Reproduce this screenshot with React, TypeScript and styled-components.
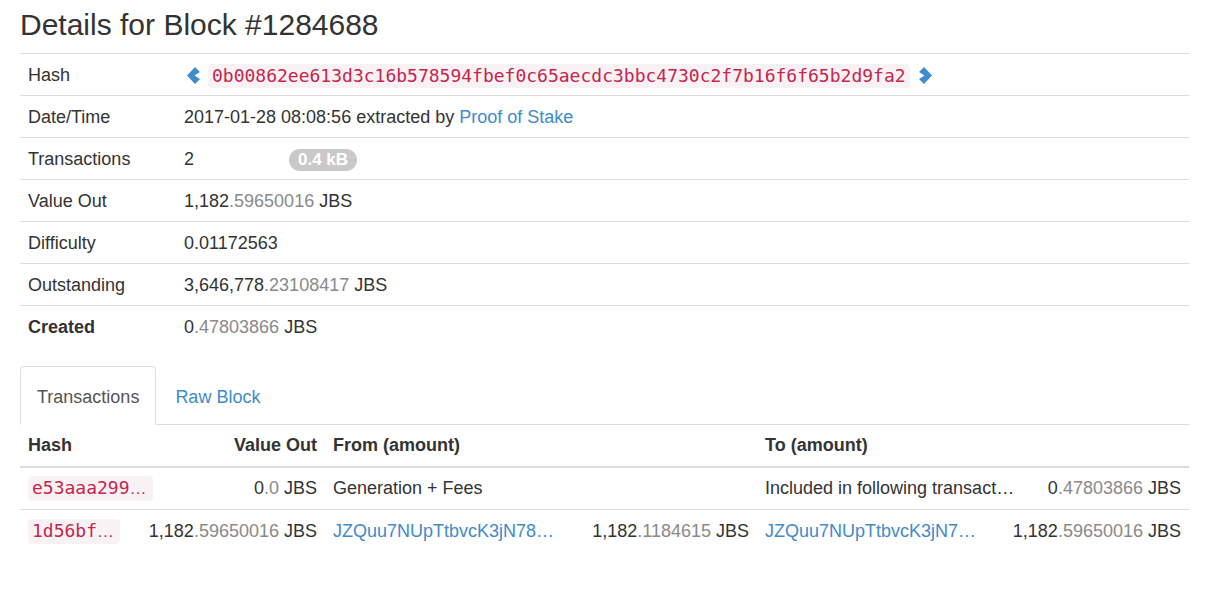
import React from 'react';
import styled, { createGlobalStyle } from 'styled-components';

const GlobalStyle = createGlobalStyle`
  body {
    margin: 0;
    background: #fff;
    color: #333;
    font-family: 'Liberation Sans', Arial, sans-serif;
    font-size: 18px;
    line-height: 25px;
  }
  * { box-sizing: border-box; }
`;

const Page = styled.div`
  width: 1169px;
  margin-left: 20px;
  padding-bottom: 40px;
`;

const Title = styled.h3`
  font-size: 30px;
  font-weight: 400;
  line-height: 33px;
  margin: 8px 0 12px;
  color: #333;
`;

const DetailTable = styled.div`
  display: grid;
  grid-template-columns: 156px 1fr;
`;

const Cell = styled.div<{ $bold?: boolean }>`
  padding: 9px 8px 7px;
  border-top: 1px solid #ddd;
  line-height: 25px;
  height: 42px;
  white-space: nowrap;
  display: flex;
  align-items: center;
  font-weight: ${p => (p.$bold ? 700 : 400)};
`;

const Code = styled.code<{ $trail?: boolean }>`
  font-family: 'DejaVu Sans Mono', Menlo, monospace;
  font-size: 18px;
  line-height: 20px;
  padding: 2px ${p => (p.$trail ? '6px' : '4px')} 2px 4px;
  color: #c7254e;
  background: #f9f2f4;
  border-radius: 4px;
  white-space: nowrap;
`;

const Dots = styled.span`
  font-family: 'Liberation Sans', Arial, sans-serif;
  font-size: 17px;
`;

const Chevron = styled.a<{ $side: 'left' | 'right' }>`
  display: flex;
  align-items: center;
  color: #428bca;
  margin: ${p => (p.$side === 'left' ? '0 8px 0 2px' : '0 0 0 9px')};
`;

const Link = styled.a`
  color: #428bca;
  text-decoration: none;
  cursor: pointer;
`;

const Count = styled.span`
  display: inline-block;
  width: 105px;
`;

const Badge = styled.span`
  display: inline-block;
  background: #c9c9c9;
  color: #fff;
  font-weight: 700;
  font-size: 17px;
  line-height: 22px;
  padding: 0 9px;
  border-radius: 11px;
`;

const Frac = styled.span`
  color: #8a8a8a;
`;

const Tabs = styled.div`
  display: flex;
  margin-top: 19px;
  border-bottom: 1px solid #ddd;
  height: 59px;
`;

const Tab = styled.a<{ $active?: boolean }>`
  display: block;
  height: 59px;
  padding: 18px 16px 14px;
  margin-right: 2px;
  line-height: 25px;
  border: 1px solid ${p => (p.$active ? '#ddd' : 'transparent')};
  border-bottom-color: ${p => (p.$active ? '#fff' : 'transparent')};
  border-radius: 4px 4px 0 0;
  background: ${p => (p.$active ? '#fff' : 'transparent')};
  color: ${p => (p.$active ? '#555' : '#428bca')};
  cursor: pointer;
`;

const TxTable = styled.div`
  display: grid;
  grid-template-columns: 120px 185px 432px 432px;
`;

const Th = styled.div<{ $right?: boolean }>`
  padding: 8px;
  height: 43px;
  line-height: 25px;
  font-weight: 700;
  border-bottom: 2px solid #ddd;
  text-align: ${p => (p.$right ? 'right' : 'left')};
  white-space: nowrap;
`;

const Td = styled.div<{ $right?: boolean; $split?: boolean; $first?: boolean }>`
  padding: 8px;
  height: ${p => (p.$first ? '41px' : '43px')};
  line-height: 25px;
  border-top: ${p => (p.$first ? 'none' : '1px solid #ddd')};
  white-space: nowrap;
  display: flex;
  align-items: center;
  justify-content: ${p => (p.$right ? 'flex-end' : p.$split ? 'space-between' : 'flex-start')};
`;

function ChevronIcon({ dir }: { dir: 'left' | 'right' }) {
  const pts = dir === 'left'
    ? '9,0 14,5 8.5,8.5 14,12 9,17 1,8.5'
    : '5,0 0,5 5.5,8.5 0,12 5,17 13,8.5';
  return (
    <svg width="14" height="17" viewBox="0 0 14 17">
      <polygon points={pts} fill="currentColor" />
    </svg>
  );
}

function Amount({ whole, frac }: { whole: string; frac: string }) {
  return (
    <span>
      {whole}<Frac>.{frac}</Frac> JBS
    </span>
  );
}

function Hash({ text }: { text: string }) {
  return (
    <Code $trail>{text}<Dots>…</Dots></Code>
  );
}

export default function App() {
  return (
    <Page>
      <GlobalStyle />
      <Title>Details for Block #1284688</Title>
      <DetailTable>
        <Cell>Hash</Cell>
        <Cell>
          <Chevron $side="left"><ChevronIcon dir="left" /></Chevron>
          <Code>0b00862ee613d3c16b578594fbef0c65aecdc3bbc4730c2f7b16f6f65b2d9fa2</Code>
          <Chevron $side="right"><ChevronIcon dir="right" /></Chevron>
        </Cell>

        <Cell>Date/Time</Cell>
        <Cell>2017-01-28 08:08:56 extracted by&nbsp;<Link>Proof of Stake</Link></Cell>

        <Cell>Transactions</Cell>
        <Cell><Count>2</Count><Badge>0.4 kB</Badge></Cell>

        <Cell>Value Out</Cell>
        <Cell><Amount whole="1,182" frac="59650016" /></Cell>

        <Cell>Difficulty</Cell>
        <Cell>0.01172563</Cell>

        <Cell>Outstanding</Cell>
        <Cell><Amount whole="3,646,778" frac="23108417" /></Cell>

        <Cell $bold>Created</Cell>
        <Cell><Amount whole="0" frac="47803866" /></Cell>
      </DetailTable>

      <Tabs>
        <Tab $active>Transactions</Tab>
        <Tab>Raw Block</Tab>
      </Tabs>

      <TxTable>
        <Th>Hash</Th>
        <Th $right>Value Out</Th>
        <Th>From (amount)</Th>
        <Th>To (amount)</Th>

        <Td $first><Hash text="e53aaa299" /></Td>
        <Td $first $right><Amount whole="0" frac="0" /></Td>
        <Td $first>Generation + Fees</Td>
        <Td $first $split>
          <span>Included in following transact…</span>
          <Amount whole="0" frac="47803866" />
        </Td>

        <Td><Hash text="1d56bf" /></Td>
        <Td $right><Amount whole="1,182" frac="59650016" /></Td>
        <Td $split>
          <Link>JZQuu7NUpTtbvcK3jN78…</Link>
          <Amount whole="1,182" frac="1184615" />
        </Td>
        <Td $split>
          <Link>JZQuu7NUpTtbvcK3jN7…</Link>
          <Amount whole="1,182" frac="59650016" />
        </Td>
      </TxTable>
    </Page>
  );
}
